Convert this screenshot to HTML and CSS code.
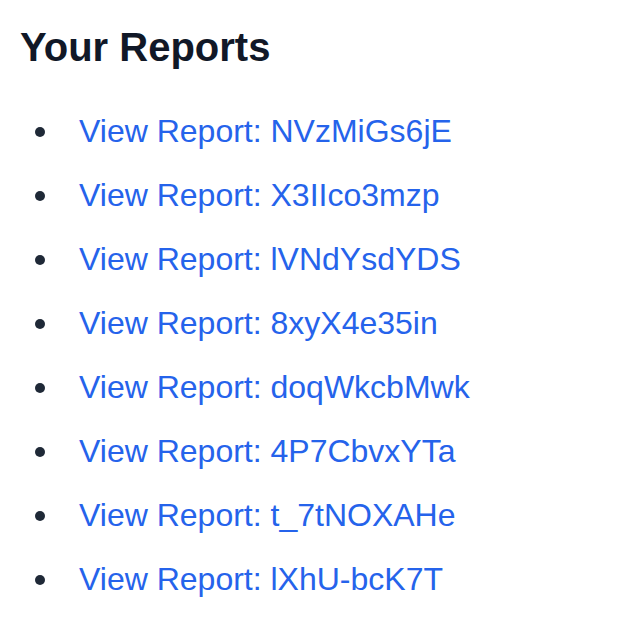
FILE: index.html
```html
<!DOCTYPE html>
<html lang="en">
<head>
<meta charset="utf-8">
<title>Your Reports</title>
<link rel="stylesheet" href="styles.css">
</head>
<body>
<main class="page">
  <h1 class="title">Your Reports</h1>
  <ul class="reports">
    <li class="report"><a class="report-link" href="#">View Report: NVzMiGs6jE</a></li>
    <li class="report"><a class="report-link" href="#">View Report: X3IIco3mzp</a></li>
    <li class="report"><a class="report-link" href="#">View Report: lVNdYsdYDS</a></li>
    <li class="report"><a class="report-link" href="#">View Report: 8xyX4e35in</a></li>
    <li class="report"><a class="report-link" href="#">View Report: doqWkcbMwk</a></li>
    <li class="report"><a class="report-link" href="#">View Report: 4P7CbvxYTa</a></li>
    <li class="report"><a class="report-link" href="#">View Report: t_7tNOXAHe</a></li>
    <li class="report"><a class="report-link" href="#">View Report: lXhU-bcK7T</a></li>
  </ul>
</main>
</body>
</html>
```
FILE: styles.css
```css
html, body {
  margin: 0;
  padding: 0;
  background: #ffffff;
}
body {
  font-family: "Liberation Sans", Arial, sans-serif;
  color: #1f2937;
}
.page {
  padding: 23px 20px 0 20px;
}
.title {
  margin: 0 0 36px 0;
  font-size: 40px;
  line-height: 48px;
  font-weight: 700;
  color: #111827;
}
.reports {
  margin: 0;
  padding: 0;
  list-style: none;
}
.report {
  display: flex;
  align-items: flex-start;
  font-size: 32px;
  line-height: 48px;
  margin: 0 0 16px 0;
  color: #1f2937;
}
.report::before {
  content: "";
  flex: none;
  width: 10px;
  height: 10px;
  margin: 20px 34px 0 15px;
  border-radius: 50%;
  background: #1f2937;
}
.report-link {
  color: #2563eb;
  text-decoration: none;
}
```
